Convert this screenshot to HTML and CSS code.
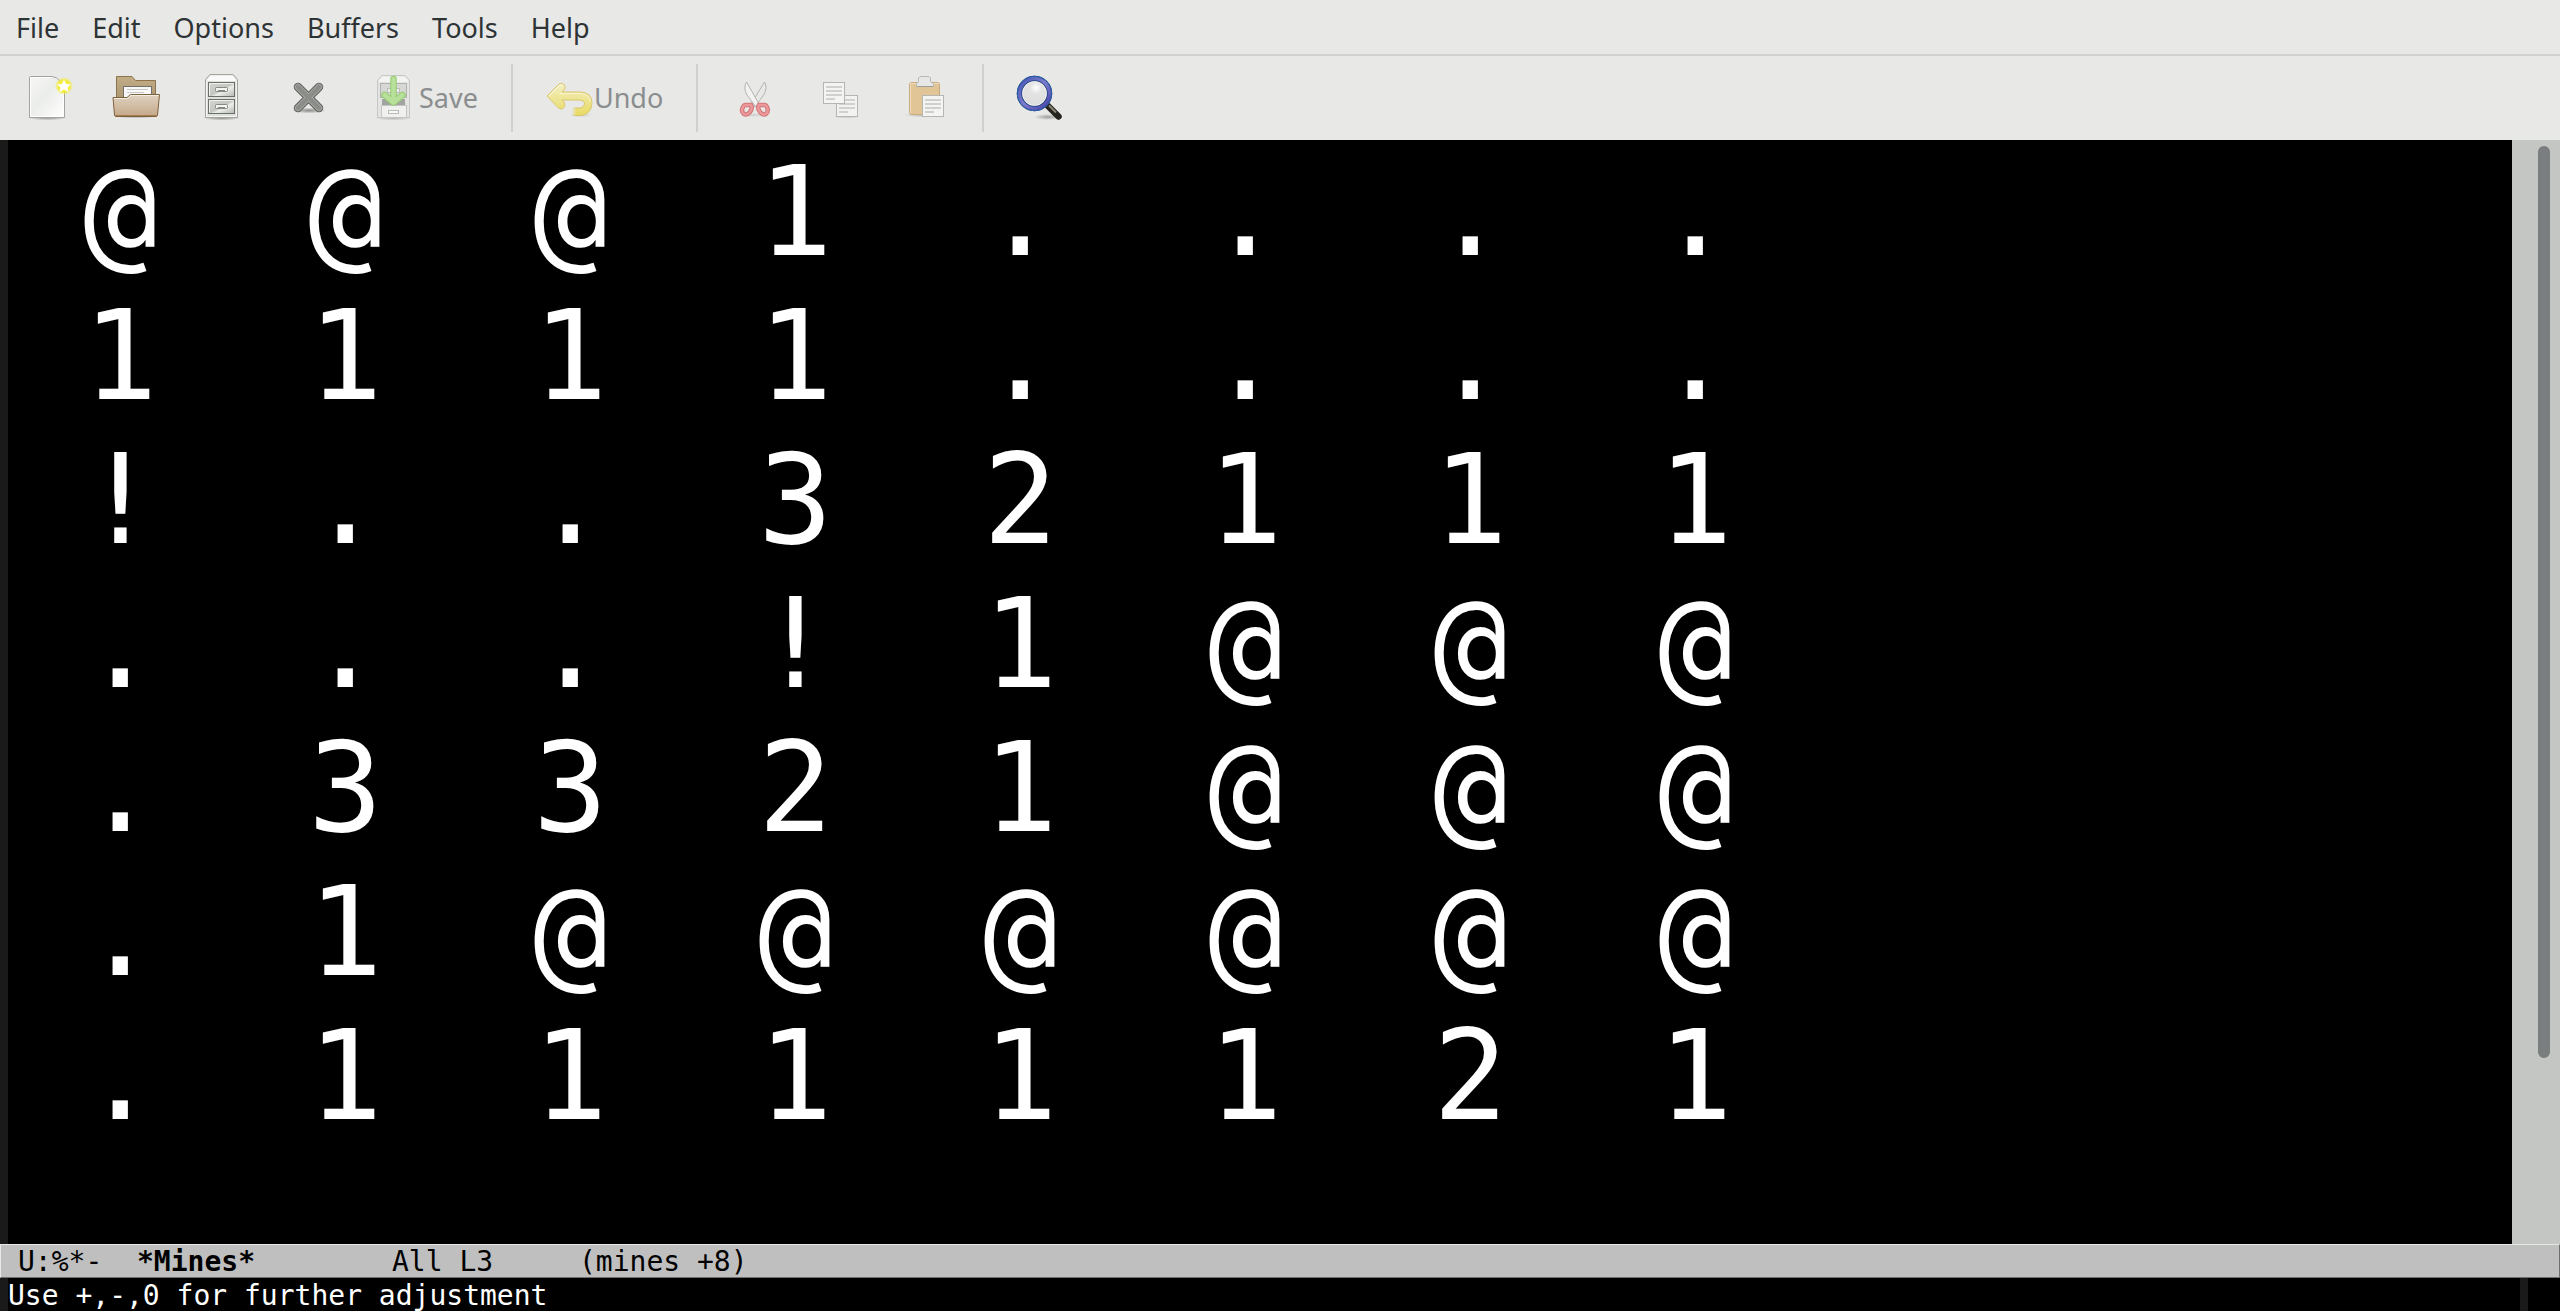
FILE: index.html
```html
<!DOCTYPE html>
<html lang="en">
<head>
<meta charset="utf-8">
<title>*Mines*</title>
<link rel="stylesheet" href="styles.css">
</head>
<body>
<svg class="defs" aria-hidden="true">
  <defs>
    <linearGradient id="paper" x1="0" y1="0" x2="1" y2="1"><stop offset="0" stop-color="#f8f8f7"/><stop offset=".45" stop-color="#ebedea"/><stop offset="1" stop-color="#fff"/></linearGradient>
    <radialGradient id="glow"><stop offset="0" stop-color="#fff8a0"/><stop offset=".6" stop-color="#f4ec2c"/><stop offset="1" stop-color="#f4ec2c" stop-opacity="0"/></radialGradient>
    <linearGradient id="folderBack" x1="0" y1="0" x2="0" y2="1"><stop offset="0" stop-color="#c2ad88"/><stop offset="1" stop-color="#a18a62"/></linearGradient>
    <linearGradient id="folderFront" x1="0" y1="0" x2="0" y2="1"><stop offset="0" stop-color="#e0d2c2"/><stop offset="1" stop-color="#c4a888"/></linearGradient>
    <linearGradient id="metal" x1="0" y1="0" x2="1" y2="1"><stop offset="0" stop-color="#d4d7d2"/><stop offset=".5" stop-color="#c3c7c0"/><stop offset=".6" stop-color="#eceeea"/><stop offset="1" stop-color="#b4b8b0"/></linearGradient>
    <linearGradient id="yellow" x1="0" y1="0" x2="0" y2="1"><stop offset="0" stop-color="#f3efc4"/><stop offset="1" stop-color="#e9da62"/></linearGradient>
    <linearGradient id="fade" x1="0" y1="0" x2="1" y2="0"><stop offset=".5" stop-color="#fff" stop-opacity="0"/><stop offset=".8" stop-color="#fff"/></linearGradient>
    <linearGradient id="ring" x1="0" y1="0" x2="1" y2="1"><stop offset="0" stop-color="#4656b4"/><stop offset=".5" stop-color="#7c7ccc"/><stop offset="1" stop-color="#4440a8"/></linearGradient>
    <radialGradient id="glass" cx=".55" cy=".3" r=".7"><stop offset="0" stop-color="#fff"/><stop offset=".3" stop-color="#e2e3e2"/><stop offset="1" stop-color="#dcdddc"/></radialGradient>
    <radialGradient id="shade"><stop offset="0" stop-color="#000" stop-opacity=".4"/><stop offset="1" stop-color="#000" stop-opacity="0"/></radialGradient>
  </defs>
</svg>

<nav class="menubar" aria-label="Main menu">
  <button type="button">File</button>
  <button type="button">Edit</button>
  <button type="button">Options</button>
  <button type="button">Buffers</button>
  <button type="button">Tools</button>
  <button type="button">Help</button>
</nav>

<div class="toolbar" role="toolbar" aria-label="Tools">
  <button type="button" class="tool" aria-label="New file">
    <svg class="icon" viewBox="0 0 48 48">
      <ellipse cx="21" cy="43.500" rx="20" ry="3" fill="url(#shade)"/>
      <path d="M5 2.500H26Q31 3 34 7Q38.500 10 38.500 14V43.500H3.500V4Q3.500 2.500 5 2.500Z" fill="url(#paper)" stroke="#a2a4a0"/>
      <path d="M4.500 42.500V3.500H26M4.500 42.500H37.500V15" fill="none" stroke="#fff"/>
      <circle cx="38" cy="12" r="9" fill="url(#glow)"/>
      <path d="M38 5.500L40 10L45 10.500L41.500 13.500L42.500 18L38 15.500L33.500 18L34.500 13.500L31 10.500L36 10Z" fill="#fff"/>
    </svg>
  </button>
  <button type="button" class="tool" aria-label="Open">
    <svg class="icon" viewBox="0 0 48 48">
      <ellipse cx="24" cy="42" rx="22" ry="2.500" fill="url(#shade)"/>
      <path d="M4.500 38V2.500H20L23.500 6.500H43.500V38Z" fill="url(#folderBack)" stroke="#8d734a"/>
      <rect x="11.500" y="12.500" width="28" height="20" fill="#f8f8f8" stroke="#73706a"/>
      <path d="M15 15.500H36M15 18.500H32" stroke="#c8c8c6"/>
      <path d="M1 23.500H15L18.500 20.500H47.500L45.500 41Q45.300 42.500 44 42.500H4Q2.700 42.500 2.500 41Z" fill="url(#folderFront)" stroke="#7f613a"/>
      <path d="M2 24.500H15.500L19 21.500H46.500" fill="none" stroke="#f3ece2"/>
      <path d="M3.500 41.500H44.500" stroke="#a07e52"/>
    </svg>
  </button>
  <button type="button" class="tool" aria-label="Directory">
    <svg class="icon" viewBox="0 0 48 48">
      <ellipse cx="23.500" cy="44" rx="19" ry="2.500" fill="url(#shade)"/>
      <path d="M7.500 5.500L12 .5H35L39.500 5.500V43.500H7.500Z" fill="#dfe1dd" stroke="#a0a39e"/>
      <path d="M9 5.500L12.500 1.500H34.500L38 5.500V7H9Z" fill="#fafafa"/>
      <path d="M8.500 7V42.500H38.500V7" fill="none" stroke="#f6f6f5"/>
      <rect x="10.500" y="8.500" width="26" height="14" fill="url(#metal)" stroke="#6b6f69"/>
      <rect x="10.500" y="25.500" width="26" height="14" fill="url(#metal)" stroke="#6b6f69"/>
      <path d="M11.500 21.500V9.500H35.500M11.500 38.500V26.500H35.500" fill="none" stroke="#f0f1ef"/>
      <rect x="17.500" y="13.500" width="12" height="4" rx="1" fill="#f4f4f3" stroke="#858883"/>
      <rect x="17.500" y="30.500" width="12" height="4" rx="1" fill="#f4f4f3" stroke="#858883"/>
      <path d="M20 16.500H27M20 33.500H27" stroke="#858883"/>
    </svg>
  </button>
  <button type="button" class="tool" aria-label="Close">
    <svg class="icon" viewBox="0 0 48 48">
      <ellipse cx="25" cy="36.500" rx="17" ry="3" fill="url(#shade)"/>
      <g fill="none" stroke-linecap="round">
        <path d="M14 13L35 34M35 13L14 34" stroke="#5e605c" stroke-width="8.500"/>
        <path d="M14 13L35 34M35 13L14 34" stroke="#a4a6a2" stroke-width="6.500"/>
        <path d="M14 13L35 34M35 13L14 34" stroke="#8a8d88" stroke-width="4.500"/>
      </g>
    </svg>
  </button>
  <button type="button" class="tool" disabled>
    <svg class="icon" viewBox="0 0 48 48" aria-hidden="true">
      <ellipse cx="23.500" cy="44" rx="19" ry="2.500" fill="url(#shade)" opacity=".6"/>
      <path d="M7.500 6.500L12 1.500H35L39.500 6.500V43.500H7.500Z" fill="#e4e5e3" stroke="#c6c8c5"/>
      <path d="M9 6L12.500 2.500H34.500L38 6V8H9Z" fill="#f3f3f2"/>
      <rect x="10.500" y="9.500" width="26" height="14" fill="#d6d8d5" stroke="#b0b2ae"/>
      <rect x="12" y="25" width="23" height="6" fill="#a2a4a1"/>
      <rect x="17.500" y="14.500" width="12" height="4" fill="#ededec" stroke="#bbbdb9"/>
      <rect x="11.500" y="31.500" width="25" height="12" fill="#f0f0ef" stroke="#c4c6c3"/>
      <rect x="18.500" y="36.500" width="10" height="3" fill="#f8f8f8" stroke="#bbbdb9"/>
      <g fill="none" stroke-linecap="round" stroke-linejoin="round">
        <path d="M23.500 5V27M14.500 21L23.500 28.500L32.500 21" stroke="#95cb70" stroke-width="6.500"/>
        <path d="M23.500 5V27M14.500 21L23.500 28.500L32.500 21" stroke="#b9e09a" stroke-width="4.500"/>
      </g>
    </svg><span class="label">Save</span>
  </button>
  <span class="separator"></span>
  <button type="button" class="tool" disabled>
    <svg class="icon" viewBox="0 0 48 48" aria-hidden="true">
      <mask id="tail"><rect width="48" height="48" fill="#fff"/><rect x="20" y="31" width="14" height="12" fill="#000"/><rect x="20" y="31" width="14" height="12" fill="url(#fade)"/></mask>
      <ellipse cx="36" cy="41" rx="12" ry="2.500" fill="url(#shade)" opacity=".3"/>
      <path mask="url(#tail)" d="M2 22L14 10Q17 8 19.500 11Q21 13.500 19 16L17 18H35Q47 18.500 47 29Q46.500 40 36 41.500H25V34H35Q39.500 33 39.500 29Q39 26 35 26H17L19 28Q21 31 19 33.500Q16.500 36.500 13.500 34Z" fill="url(#yellow)" stroke="#d9c66c"/>
      <path d="M4 22L14.500 11.500Q17 10 18.500 12.500" fill="none" stroke="#f8f6de"/>
      <path d="M15 19.500H35Q44.500 20 45.500 28" fill="none" stroke="#f8f4cc"/>
    </svg><span class="label">Undo</span>
  </button>
  <span class="separator"></span>
  <button type="button" class="tool" disabled aria-label="Cut">
    <svg class="icon" viewBox="0 0 48 48">
      <ellipse cx="24" cy="41" rx="14" ry="2" fill="url(#shade)" opacity=".3"/>
      <path d="M34.500 8Q38 14 33.500 21L25 33L21.500 29Z" fill="#e8e9e7" stroke="#b3b5b2"/>
      <path d="M16.500 8Q13 14 17 21L26 33L28.500 29Z" fill="#f2f2f1" stroke="#b3b5b2"/>
      <g fill="none">
        <path d="M15 31H21Q23 34 20 38Q17 41.500 14 40Q10.500 37 13 33Q14 31 15 31Z" stroke="#d07678" stroke-width="4.500"/>
        <path d="M35 31H29Q27 34 30 38Q33 41.500 36 40Q39 37 37 33Q36 31 35 31Z" stroke="#d07678" stroke-width="4.500"/>
        <path d="M15 31H21Q23 34 20 38Q17 41.500 14 40Q10.500 37 13 33Q14 31 15 31Z" stroke="#ec9799" stroke-width="2.500"/>
        <path d="M35 31H29Q27 34 30 38Q33 41.500 36 40Q39 37 37 33Q36 31 35 31Z" stroke="#ec9799" stroke-width="2.500"/>
      </g>
    </svg>
  </button>
  <button type="button" class="tool" disabled aria-label="Copy">
    <svg class="icon" viewBox="0 0 48 48">
      <ellipse cx="31" cy="42.500" rx="14" ry="2" fill="url(#shade)" opacity=".5"/>
      <rect x="20.500" y="21.500" width="21" height="21" fill="#f2f2f1" stroke="#b4b6b3"/>
      <path d="M23 26H39M23 30H39M23 34H39M23 38H32" stroke="#d0d1cf" stroke-width="2"/>
      <rect x="7.500" y="8.500" width="21" height="21" fill="#f4f4f3" stroke="#b4b6b3"/>
      <path d="M10 13H26M10 17H26M10 21H26M10 25H19" stroke="#d0d1cf" stroke-width="2"/>
    </svg>
  </button>
  <button type="button" class="tool" disabled aria-label="Paste">
    <svg class="icon" viewBox="0 0 48 48">
      <ellipse cx="22" cy="41" rx="21" ry="2.500" fill="url(#shade)" opacity=".5"/>
      <rect x="7.500" y="8.500" width="30" height="32" rx="2" fill="#e2c597" stroke="#c8aa7c"/>
      <path d="M8.500 39V9.500H36.500" fill="none" stroke="#efdcbe"/>
      <path d="M14.500 12.500V10L16.500 7.500V4L18 2.500H27L28.500 4V7.500L31.500 10V12.500Z" fill="#e6e7e6" stroke="#b6b8b6"/>
      <path d="M15 12.500H31" stroke="#9c9e9c"/>
      <rect x="20.500" y="21.500" width="21" height="21" fill="#f4f4f3" stroke="#b4b6b3"/>
      <path d="M23 26H39M23 30H39M23 34H39M23 38H32" stroke="#d0d1cf" stroke-width="2"/>
    </svg>
  </button>
  <span class="separator"></span>
  <button type="button" class="tool" aria-label="Search">
    <svg class="icon" viewBox="0 0 48 48">
      <ellipse cx="32" cy="43" rx="14" ry="3" fill="url(#shade)" opacity=".8"/>
      <path d="M32 32L42.500 42.500" stroke="#26241f" stroke-width="6.500" stroke-linecap="round"/>
      <path d="M33 31.500L40 38.500" stroke="#8b8574" stroke-width="2"/>
      <circle cx="18.500" cy="19.500" r="14" fill="url(#glass)"/>
      <circle cx="18.500" cy="19.500" r="15" fill="none" stroke="#20407e" stroke-width="5.500"/>
      <circle cx="18.500" cy="19.500" r="15" fill="none" stroke="url(#ring)" stroke-width="3.500"/>
      <circle cx="18.500" cy="19.500" r="17.200" fill="none" stroke="#2a62ac"/>
      <circle cx="18.500" cy="19.500" r="12" fill="none" stroke="#fafafa" opacity=".7"/>
    </svg>
  </button>
</div>

<main class="window">
  <table class="board" aria-label="Mines board">
    <tbody>
      <tr><td>@</td><td>@</td><td>@</td><td>1</td><td>.</td><td>.</td><td>.</td><td>.</td></tr>
      <tr><td>1</td><td>1</td><td>1</td><td>1</td><td>.</td><td>.</td><td>.</td><td>.</td></tr>
      <tr><td>!</td><td>.</td><td>.</td><td>3</td><td>2</td><td>1</td><td>1</td><td>1</td></tr>
      <tr><td>.</td><td>.</td><td>.</td><td>!</td><td>1</td><td>@</td><td>@</td><td>@</td></tr>
      <tr><td>.</td><td>3</td><td>3</td><td>2</td><td>1</td><td>@</td><td>@</td><td>@</td></tr>
      <tr><td>.</td><td>1</td><td>@</td><td>@</td><td>@</td><td>@</td><td>@</td><td>@</td></tr>
      <tr><td>.</td><td>1</td><td>1</td><td>1</td><td>1</td><td>1</td><td>2</td><td>1</td></tr>
    </tbody>
  </table>
  <div class="scrollbar"><div class="thumb"></div></div>
</main>

<div class="modeline"><span class="status">U:%*-</span><b class="buffer">*Mines*</b><span class="position">All L3</span><span>(mines +8)</span></div>
<div class="echo"><span class="message">Use +,-,0 for further adjustment</span><span class="fringe"></span></div>
</body>
</html>
```

FILE: styles.css
```css
* {
  box-sizing: border-box;
}

body {
  margin: 0;
  min-height: 100vh;
  display: flex;
  flex-direction: column;
  background: #000;
  color: #fff;
  font-family: "DejaVu Sans Mono", monospace;
  font-size: 28px;
}

button {
  border: 0;
  padding: 0;
  background: none;
  color: #2e3436;
  font: 27px/36px "Noto Sans", "Open Sans", sans-serif;
}

.defs {
  position: absolute;
  width: 0;
  height: 0;
}

.menubar {
  display: flex;
  align-items: center;
  gap: 33px;
  height: 56px;
  padding: 2px 16px 0;
  background: #e8e8e6;
  border-bottom: 2px solid #d0d1cf;
}

.toolbar {
  display: flex;
  align-items: center;
  height: 84px;
  padding: 0 7px;
  background: #e8e8e6;
}

.tool {
  display: flex;
  align-items: center;
  padding: 0 19px;
}

.tool:disabled {
  color: #8b8e8f;
}

.icon {
  display: block;
  flex: none;
  width: 48px;
  height: 48px;
}

.label {
  padding: 0 1px;
}

.separator {
  width: 2px;
  height: 68px;
  margin: 0 13px;
  background: #d0d1cf;
}

.window {
  flex: 1;
  display: flex;
  justify-content: space-between;
  border-left: 8px solid #1a1a1a;
}

.board {
  align-self: flex-start;
  margin-left: 75px;
  border-collapse: collapse;
  table-layout: fixed;
  width: 1800px;
  font-size: 124px;
  line-height: 144px;
}

.board td {
  padding: 0;
}

.scrollbar {
  display: flex;
  justify-content: flex-end;
  width: 48px;
  padding: 6px 10px;
  background: #c4c6c4;
}

.thumb {
  width: 12px;
  height: 83.5%;
  border-radius: 6px;
  background: #7a7e7e;
}

.modeline {
  display: flex;
  padding: 2px 17px 0;
  border: 1px solid;
  border-color: #e8e8e8 #6e6e6e #6e6e6e #e8e8e8;
  background: #bfbfbf;
  color: #000;
  line-height: 30px;
}

.status {
  width: 119px;
}

.buffer {
  width: 255px;
}

.position {
  width: 187px;
}

.echo {
  display: flex;
  justify-content: space-between;
  padding-right: 32px;
  border-left: 8px solid #1a1a1a;
  line-height: 31px;
}

.message {
  padding-top: 2px;
}

.fringe {
  width: 8px;
  background: #1a1a1a;
}
```
